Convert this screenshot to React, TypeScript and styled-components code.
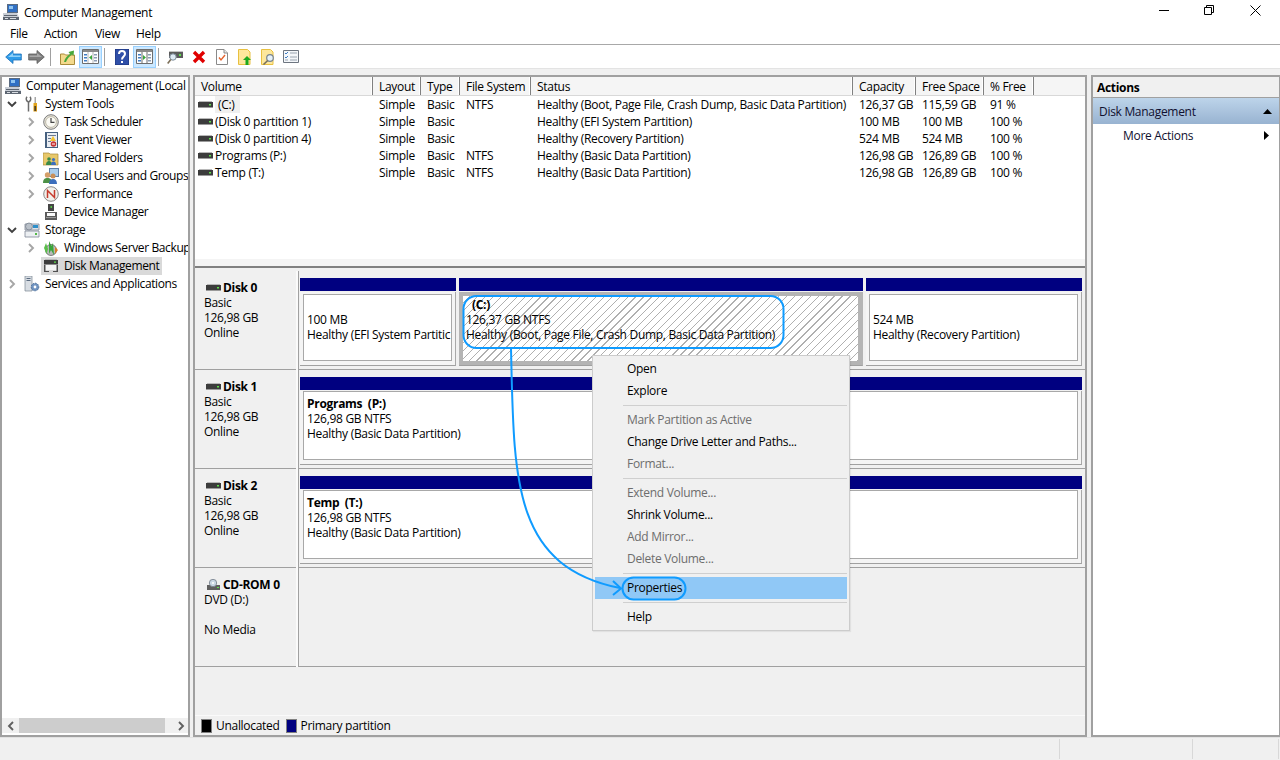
import React from "react";
import styled, { createGlobalStyle } from "styled-components";

const Global = createGlobalStyle`
  html, body { margin: 0; padding: 0; background: #f0f0f0; }
  * { box-sizing: border-box; }
  #root { width: 1280px; height: 760px; overflow: hidden; }
`;

const Page = styled.div`
  position: relative;
  width: 1280px;
  height: 760px;
  display: flex;
  flex-direction: column;
  background: #f0f0f0;
  color: #000;
  font-family: "Open Sans", "Noto Sans", sans-serif;
  font-size: 12px;
  letter-spacing: -0.3px;
  line-height: 15px;
  white-space: nowrap;
`;

const TitleBar = styled.div`
  height: 22px;
  background: #fff;
  display: flex;
  align-items: center;
  padding-left: 3px;
  gap: 5px;
  padding-top: 2px;
`;
const TitleText = styled.span`
  flex: 1;
`;
const WinControls = styled.div`
  display: flex;
  height: 22px;
  margin-top: -4px;
`;
const WinBtn = styled.div<{ $w: number }>`
  width: ${(p) => p.$w}px;
  display: flex;
  align-items: center;
  justify-content: center;
`;

const MenuBar = styled.div`
  height: 23px;
  background: #fff;
  border-bottom: 1px solid #a8a8a8;
  display: flex;
  align-items: center;
  padding-left: 10px;
`;
const MenuEntry = styled.span<{ $w: number }>`
  width: ${(p) => p.$w}px;
`;

const Toolbar = styled.div`
  height: 24px;
  background: #fff;
  border-bottom: 1px solid #e3e3e3;
  display: flex;
  align-items: center;
  padding-left: 2px;
`;
const Tool = styled.div<{ $on?: boolean }>`
  width: 23px;
  height: 22px;
  display: flex;
  align-items: center;
  justify-content: center;
  background: ${(p) => (p.$on ? "#cce8ff" : "transparent")};
  border: 1px solid ${(p) => (p.$on ? "#99d1ff" : "transparent")};
`;
const ToolSep = styled.div`
  width: 1px;
  height: 18px;
  background: #a0a0a0;
  margin: 0 5px 0 2px;
`;

const Workspace = styled.div`
  flex: 1;
  display: flex;
  padding-top: 6px;
  min-height: 0;
`;

const TreePane = styled.div`
  width: 190px;
  margin-right: 3px;
  border: 2px solid #a0a0a0;
  background: #fff;
  display: flex;
  flex-direction: column;
  overflow: hidden;
`;
const TreeList = styled.div`
  flex: 1;
  overflow: hidden;
  letter-spacing: -0.38px;
`;
const TreeRow = styled.div<{ $level: number }>`
  height: 18px;
  display: flex;
  align-items: center;
  padding-left: ${(p) => [3, 3, 22][p.$level]}px;
`;
const Twist = styled.span`
  width: 14px;
  flex: none;
  margin-right: 5px;
  display: flex;
  justify-content: center;
`;
const TreeIcon = styled.span`
  width: 16px;
  height: 16px;
  flex: none;
  margin-right: 5px;
  display: flex;
  align-items: center;
  justify-content: center;
`;
const TreeLabel = styled.span<{ $sel?: boolean }>`
  background: ${(p) => (p.$sel ? "#d9d9d9" : "transparent")};
  margin-left: ${(p) => (p.$sel ? "-23px" : "0")};
  padding-left: ${(p) => (p.$sel ? "23px" : "0")};
  padding-right: ${(p) => (p.$sel ? "3px" : "0")};
  height: 18px;
  line-height: 18px;
`;
const SelIcon = styled(TreeIcon)`
  position: relative;
  z-index: 1;
`;
const HScroll = styled.div`
  height: 15px;
  margin-bottom: 2px;
  display: flex;
  align-items: center;
  background: #f0f0f0;
`;
const ScrollEnd = styled.span<{ $right?: boolean }>`
  width: ${(p) => (p.$right ? "23px" : "17px")};
  padding-left: ${(p) => (p.$right ? "8px" : "0")};
  flex: none;
  display: flex;
  justify-content: center;
`;
const ScrollThumb = styled.div`
  width: 146px;
  height: 15px;
  background: #cdcdcd;
`;

const Center = styled.div`
  width: 894px;
  margin-right: 4px;
  border: 2px solid #a0a0a0;
  display: flex;
  flex-direction: column;
  background: #f0f0f0;
`;
const ListPane = styled.div`
  height: 182px;
  background: #fff;
  flex: none;
`;
const HeadRow = styled.div`
  height: 19px;
  display: flex;
  background: #f5f5f5;
  border-bottom: 1px solid #d8d8d8;
`;
const HeadCell = styled.div<{ $w: number }>`
  width: ${(p) => p.$w}px;
  flex: none;
  padding-left: 6px;
  line-height: 19px;
  border-right: 1px solid #808080;
  box-shadow: inset -1px 0 0 #fff;
`;
const DataRow = styled.div`
  height: 17px;
  display: flex;
  align-items: center;
`;
const Cell = styled.div<{ $w: number }>`
  width: ${(p) => p.$w}px;
  flex: none;
  padding-left: 6px;
`;
const VolCell = styled.div<{ $w: number }>`
  width: ${(p) => p.$w}px;
  flex: none;
  display: flex;
  align-items: center;
  padding-left: 3px;
  gap: 2px;
`;
const VolName = styled.span<{ $sel?: boolean }>`
  background: ${(p) => (p.$sel ? "#f0f0f0" : "transparent")};
  padding: ${(p) => (p.$sel ? "0 5px 0 3px" : "0")};
  line-height: 17px;
`;

const Sash = styled.div`
  height: 9px;
  flex: none;
  background: #f4f4f4;
  border-bottom: 2px solid #808080;
`;

const Graph = styled.div`
  flex: 1;
  display: flex;
  flex-direction: column;
  padding-top: 3px;
`;
const DiskRow = styled.div`
  height: 99px;
  flex: none;
  display: flex;
  border-bottom: 1px solid #a0a0a0;
`;
const DiskInfo = styled.div`
  width: 104px;
  flex: none;
  padding: 9px 0 0 9px;
  border-right: 1px solid #a0a0a0;
  box-shadow: inset -2px 0 0 #fafafa;
  margin-bottom: -1px;
`;
const DiskName = styled.div`
  display: flex;
  align-items: center;
  gap: 2px;
  margin-left: 2px;
  font-weight: 700;
`;
const Parts = styled.div`
  flex: 1;
  display: flex;
  gap: 3px;
  padding: 7px 0 0 1px;
`;
const Part = styled.div<{ $w: number }>`
  width: ${(p) => p.$w}px;
  flex: none;
  display: flex;
  flex-direction: column;
`;
const PartBar = styled.div`
  height: 13px;
  background: #000080;
  flex: none;
  margin-bottom: 1px;
`;
const PartFrame = styled.div<{ $sel?: boolean; $inset?: boolean }>`
  height: 74px;
  padding: ${(p) => (p.$sel ? "0" : p.$inset ? "2px 3px 4px" : "0 3px 4px")};
  border-bottom: 1px solid #a0a0a0;
  border-right: 1px solid ${(p) => (p.$sel ? "#b4b4b4" : "#a8a8a8")};
  background: #f4f4f4;
  display: flex;
`;
const PartBody = styled.div<{ $sel?: boolean; $inset?: boolean }>`
  flex: 1;
  padding: ${(p) => (p.$sel ? "1px 0 0 3px" : p.$inset ? "2px 0 0 3px" : "4px 0 0 3px")};
  border: ${(p) => (p.$sel ? "4px solid #b4b4b4" : "1px solid #a8a8a8")};
  overflow: hidden;
  background: ${(p) =>
    p.$sel
      ? "repeating-linear-gradient(135deg, #fff 0 4.7px, #b0b0b0 4.7px 5.6px)"
      : "#fff"};
`;
const PartTitle = styled.div<{ $indent?: boolean }>`
  font-weight: 700;
  height: 15px;
  white-space: pre;
  padding-left: ${(p) => (p.$indent ? "6px" : "0")};
`;
const CdFill = styled.div`
  flex: 1;
`;
const Legend = styled.div`
  flex: 1;
  display: flex;
  flex-direction: column;
  justify-content: flex-end;
`;
const LegendRow = styled.div`
  height: 20px;
  display: flex;
  align-items: center;
  padding-left: 6px;
  border-top: 1px solid #fafafa;
`;
const Swatch = styled.span<{ $c: string }>`
  width: 11px;
  height: 14px;
  background: ${(p) => p.$c};
  border: 1px solid #808080;
  margin-right: 4px;
`;
const LegendText = styled.span`
  margin-right: 6px;
`;

const ActionsPane = styled.div`
  width: 189px;
  border: 2px solid #a0a0a0;
  border-right-width: 1px;
  background: #fff;
`;
const ActionsHead = styled.div`
  height: 21px;
  padding-left: 4px;
  line-height: 21px;
  font-weight: 700;
  background: #f0f0f0;
  border-bottom: 1px solid #a0a0a0;
`;
const ActionsGroup = styled.div`
  height: 26px;
  display: flex;
  align-items: center;
  justify-content: space-between;
  padding: 0 7px 0 6px;
  background: linear-gradient(#bdd4ea, #98b3d1);
  color: #101030;
`;
const ActionItem = styled.div`
  height: 22px;
  display: flex;
  align-items: center;
  justify-content: space-between;
  padding: 0 10px 0 30px;
  color: #101030;
`;

const StatusBar = styled.div`
  height: 23px;
  display: flex;
  justify-content: flex-end;
  background: #f0f0f0;
  border-top: 1px solid #e2e2e2;
`;
const StatusCell = styled.div<{ $w: number }>`
  width: ${(p) => p.$w}px;
  border-left: 1px solid #d8d8d8;
  margin: 1px 0;
`;

const MenuPanel = styled.div`
  position: absolute;
  left: 592px;
  top: 355px;
  width: 258px;
  height: 276px;
  padding: 2px;
  background: #f0f0f0;
  border: 1px solid #cccccc;
  box-shadow: 1px 1px 1px rgba(0, 0, 0, 0.06);
`;
const MenuItem = styled.div<{ $off?: boolean; $hot?: boolean }>`
  height: 22px;
  line-height: 22px;
  padding-left: 32px;
  color: ${(p) => (p.$off ? "#6d6d6d" : "#000")};
  background: ${(p) => (p.$hot ? "#90c8f6" : "transparent")};
`;
const MenuSep = styled.div`
  height: 1px;
  margin: 3px 0 3px 28px;
  background: #cfcfcf;
`;
const Overlay = styled.svg`
  position: absolute;
  left: 0;
  top: 0;
  pointer-events: none;
`;

/* ---- icons ---- */
const DiskIcon = () => (
  <svg width="15" height="9" viewBox="0 0 15 9">
    <path d="M1 1h13v1H1z" fill="#b8b8b8" />
    <path d="M0 2h15v5H0z" fill="#3c3c3c" />
    <path d="M0 7h15v1H0z" fill="#9a9a9a" />
    <path d="M11 4h2v1.400h-2z" fill="#5ee04a" />
  </svg>
);
const DiskMgmtIcon = () => (
  <svg width="16" height="14" viewBox="0 0 16 14">
    <path d="M2 0h12v1H2z" fill="#b8b8b8" />
    <path d="M1 1h14v4H1z" fill="#3c3c3c" />
    <path d="M11 2.500h2v1.200h-2z" fill="#5ee04a" />
    <path d="M1 5h14v1H1z" fill="#8c8c8c" />
    <path d="M2 6h12v5H2z" fill="#f6f6f6" />
    <path d="M1 6h1.500v7H1zM13.500 6H15v7h-1.500zM1 12h5v1H1zM10 12h5v1h-5z" fill="#505050" />
  </svg>
);
const CompIcon = () => (
  <svg width="16" height="16" viewBox="0 0 16 16">
    <path d="M4 0h11v9H4z" fill="#5b6b80" />
    <path d="M5 1h9v7H5z" fill="#2f6fc4" />
    <path d="M6 2h4v3H6z" fill="#8fc4f0" />
    <path d="M0 9h14l2 4H0z" fill="#c9ced6" />
    <path d="M1 11h13v1H1zM0 13h16v3H0z" fill="#5d6672" />
    <path d="M2 14h3v1H2zM7 14h6v1H7z" fill="#d8dce2" />
  </svg>
);
const ToolsIcon = () => (
  <svg width="16" height="16" viewBox="0 0 16 16">
    <path d="M3 .8C1.500 2.500 2.200 5.300 4.500 6v9.500" stroke="#6b6b6b" strokeWidth="1.500" fill="none" />
    <path d="M6 .8C7.500 2.500 6.800 5.300 4.500 6" stroke="#6b6b6b" strokeWidth="1.500" fill="none" />
    <path d="M10.500 1h1.500v6h-1.500z" fill="#a8a8a8" />
    <path d="M9.500 7h3.500v3H9.500z" fill="#e2a41c" />
    <path d="M9.500 10h3.500v5.500H9.500z" fill="#d9960f" />
    <path d="M10.500 10h1.300v5h-1.300z" fill="#30302c" />
  </svg>
);
const ClockIcon = () => (
  <svg width="16" height="16" viewBox="0 0 16 16">
    <circle cx="8" cy="8" r="7.300" fill="#e9e6dc" stroke="#7a7a7a" />
    <circle cx="8" cy="8" r="5.400" fill="#fbfaf4" stroke="#bdb9a8" />
    <path d="M8 4v4.300h3.500" stroke="#444" strokeWidth="1.200" fill="none" />
  </svg>
);
const EventIcon = () => (
  <svg width="16" height="16" viewBox="0 0 16 16">
    <path d="M2 0h13v16H2z" fill="#46607f" />
    <path d="M4 1h10v14H4z" fill="#e9edf2" />
    <path d="M5 3h8v1H5zM5 6h3v1H5zM5 9h3v1H5z" fill="#6a7a92" />
    <path d="M10 4l3 5H7z" fill="#f2c230" />
    <circle cx="10.500" cy="12" r="2.800" fill="#c73434" />
    <path d="M9 12h3" stroke="#fff" />
  </svg>
);
const SharedIcon = () => (
  <svg width="16" height="16" viewBox="0 0 16 16">
    <path d="M0 3h6l1 1h8v11H0z" fill="#e8c86a" stroke="#a98b3a" strokeWidth=".7" />
    <circle cx="6" cy="9" r="1.800" fill="#3b8a47" />
    <path d="M3 15c0-3 1.400-4 3-4s3 1 3 4z" fill="#3b8a47" />
    <circle cx="10.500" cy="9.500" r="1.600" fill="#3d6fbd" />
    <path d="M8 15c0-2.500 1-3.500 2.500-3.500s2.500 1 2.500 3.500z" fill="#3d6fbd" />
  </svg>
);
const UsersIcon = () => (
  <svg width="16" height="16" viewBox="0 0 16 16">
    <path d="M6 0h10v9H6z" fill="#5b7ea8" />
    <path d="M7 1h8v7H7z" fill="#a9cdec" />
    <circle cx="4.500" cy="7" r="2.700" fill="#d59f6a" />
    <path d="M0 15c0-4 2-5 4.500-5S9 11 9 15z" fill="#4d9147" />
    <circle cx="10" cy="8" r="2.500" fill="#c98f58" />
    <path d="M6 16c0-3.500 1.600-5 4-5s4 1.500 4 5z" fill="#3d6fbd" />
  </svg>
);
const PerfIcon = () => (
  <svg width="16" height="16" viewBox="0 0 16 16">
    <circle cx="8" cy="8" r="7.300" fill="#f2f0ea" stroke="#8a8a8a" />
    <path d="M4.500 12V4.500l7 7V4" stroke="#c53a2c" strokeWidth="1.500" fill="none" />
  </svg>
);
const DeviceIcon = () => (
  <svg width="16" height="16" viewBox="0 0 16 16">
    <path d="M5 0h6v7H5z" fill="#454545" />
    <path d="M7.500 2h1.500v2H7.500z" fill="#56c744" />
    <path d="M2 8h12v8H2z" fill="#5b5b5b" />
    <path d="M4 9h8v3H4z" fill="#fafafa" />
    <path d="M3 13h10v1H3z" fill="#9b9b9b" />
  </svg>
);
const StorageIcon = () => (
  <svg width="16" height="16" viewBox="0 0 16 16">
    <path d="M1 2h14v6H1z" fill="#dfe3e8" stroke="#7d8794" strokeWidth=".8" />
    <circle cx="5" cy="4.500" r="3.500" fill="#b9c0c8" stroke="#707a86" strokeWidth=".7" />
    <path d="M9 3h5v3H9z" fill="#2f8fc9" />
    <path d="M1 9h14v6H1z" fill="#eceff2" stroke="#7d8794" strokeWidth=".8" />
    <path d="M11 11h2v2h-2z" fill="#53b947" />
  </svg>
);
const BackupIcon = () => (
  <svg width="16" height="16" viewBox="0 0 16 16">
    <circle cx="8" cy="10" r="5.500" fill="#b9b9b9" stroke="#555" strokeWidth=".7" />
    <path d="M6 1l2.500 5 1.500-3 1 12-3-5-2 4z" fill="#3aa53a" />
    <path d="M3 3l2 6-1.500 5L1 8z" fill="#5abf4a" />
    <path d="M12 7l3 3-3 4z" fill="#d77d2a" />
  </svg>
);
const ServicesIcon = () => (
  <svg width="16" height="16" viewBox="0 0 16 16">
    <path d="M1 0h7v15H1z" fill="#d8dde3" stroke="#7d8794" strokeWidth=".7" />
    <path d="M2.500 2h4v1h-4zM2.500 4h4v1h-4z" fill="#5c6c80" />
    <circle cx="11" cy="11" r="3.800" fill="#6f93c0" stroke="#4c6d97" strokeDasharray="1.500 1" />
    <circle cx="11" cy="11" r="1.400" fill="#fff" />
  </svg>
);
const Chevron = ({ open, dark, left }: { open?: boolean; dark?: boolean; left?: boolean }) => (
  <svg width="10" height="10" viewBox="0 0 10 10">
    <path
      d={open ? "M1 3l4 4 4-4" : left ? "M7 1L3 5l4 4" : "M3 1l4 4-4 4"}
      fill="none"
      stroke={open ? "#404040" : dark ? "#606060" : "#a6a6a6"}
      strokeWidth="1.900"
    />
  </svg>
);

const BackIcon = () => (
  <svg width="17" height="14" viewBox="0 0 17 14">
    <path d="M8 .5L.7 7 8 13.500V10h8.300V4H8z" fill="#2e9be8" stroke="#1d6fb8" strokeWidth=".8" />
    <path d="M8 3v2.500h7.500V7H3z" fill="#8ed0f8" />
  </svg>
);
const ForwardIcon = () => (
  <svg width="17" height="14" viewBox="0 0 17 14">
    <path d="M9 .5L16.300 7 9 13.500V10H.7V4H9z" fill="#7d7d7d" stroke="#5a5a5a" strokeWidth=".8" />
    <path d="M9 3v2.500H1.500V7H14z" fill="#a9a9a9" />
  </svg>
);
const UpIcon = () => (
  <svg width="15" height="16" viewBox="0 0 15 16">
    <path d="M.5 5h4l1 1h9v9.500H.5z" fill="#f3d98c" stroke="#a98b3a" />
    <path d="M4 13c1-4 3-6 6-8l-1.500-2L14 1.500 13.500 7 12 5.500C9 8 7 10 6 13z" fill="#4aa83a" />
  </svg>
);
const PaneIcon = ({ dir }: { dir: "l" | "r" }) => (
  <svg width="17" height="15" viewBox="0 0 17 15">
    <path d="M.5.500h16v14H.5z" fill="#fff" stroke="#6d6d6d" />
    <path d="M1 1h15v2H1z" fill="#8a8a8a" />
    <path d="M6 3v11M11 3v11" stroke={dir === "l" ? "#b5b5b5" : "#6d6d6d"} />
    <path d="M2 5h3v1.500H2zM2 8h3v1.500H2zM2 11h3v1.500H2z" fill="#3f7dc4" />
    <path d="M12 5h3v1.500h-3zM12 8h3v1.500h-3zM12 11h3v1.500h-3z" fill="#8a9cb4" />
    <path d={dir === "l" ? "M10 6v5L7 8.500z" : "M7 6v5l3-2.500z"} fill="#3aa53a" />
  </svg>
);
const HelpIcon = () => (
  <svg width="14" height="16" viewBox="0 0 14 16">
    <path d="M0 0h14v16H0z" fill="#2f4fa8" />
    <path d="M0 0h14v16H0z" fill="none" stroke="#1d3278" />
    <path d="M4 5c0-4 6-4 6 0 0 2.500-3 2.500-3 5.500" fill="none" stroke="#fff" strokeWidth="2" />
    <path d="M6 12h2v2H6z" fill="#fff" />
  </svg>
);
const ConnectIcon = () => (
  <svg width="17" height="16" viewBox="0 0 17 16">
    <path d="M2 3h14v6H2z" fill="#5b5b5b" />
    <path d="M2 2h14v1H2z" fill="#c4c4c4" />
    <path d="M12 5h2v2h-2z" fill="#5ee04a" />
    <circle cx="6" cy="8" r="3.200" fill="#dfeaf4" stroke="#7b8a99" />
    <path d="M3.800 10.500L.7 14.500" stroke="#7c6f58" strokeWidth="1.600" />
  </svg>
);
const DeleteIcon = () => (
  <svg width="14" height="14" viewBox="0 0 14 14">
    <path d="M2 2l10 10M12 2L2 12" stroke="#e00000" strokeWidth="3.400" />
  </svg>
);
const DocIcon = () => (
  <svg width="12" height="16" viewBox="0 0 12 16">
    <path d="M.5.500H8L11.500 4v11.500H.5z" fill="#fff" stroke="#8a8a8a" />
    <path d="M8 .5V4h3.500" fill="#e9e9e9" stroke="#8a8a8a" />
    <path d="M3 8.500l2 2.500 4-5" fill="none" stroke="#e4632e" strokeWidth="1.400" />
  </svg>
);
const YellowPage = ({ kind }: { kind: "up" | "find" }) => (
  <svg width="14" height="16" viewBox="0 0 14 16">
    <path d="M.5.500h9L12 3v12.500H.5z" fill="#fde79c" stroke="#e8c040" />
    {kind === "up" ? (
      <path d="M9 7l4 4h-2.500v5h-3v-5H5z" fill="#1da81d" />
    ) : (
      <>
        <circle cx="9" cy="9" r="3.300" fill="#e5f1fa" stroke="#78848f" strokeWidth="1.200" />
        <path d="M6.700 11.500L2.500 15.500" stroke="#78705c" strokeWidth="1.600" />
      </>
    )}
  </svg>
);
const ListIcon = () => (
  <svg width="16" height="13" viewBox="0 0 16 13">
    <path d="M.5.500h15v12H.5z" fill="#f4f7fa" stroke="#6d7580" />
    <path d="M2 3l1 1 2-2M2 7l1 1 2-2" fill="none" stroke="#3f7dc4" />
    <path d="M7 3h7M7 7h7M7 10h7M2 10h3" stroke="#9aa4b0" />
  </svg>
);
const TriUp = () => (
  <svg width="9" height="5" viewBox="0 0 9 5">
    <path d="M4.500 0L9 5H0z" fill="#000" />
  </svg>
);
const TriRight = () => (
  <svg width="5" height="9" viewBox="0 0 5 9">
    <path d="M0 0l5 4.500L0 9z" fill="#000" />
  </svg>
);
const CdIcon = () => (
  <svg width="15" height="12" viewBox="0 0 15 12">
    <path d="M1 6h13v5H1z" fill="#5f5f5f" />
    <circle cx="7" cy="4" r="3.700" fill="#c9d6e4" stroke="#717a85" strokeWidth=".8" />
    <circle cx="7" cy="4" r="1" fill="#fff" />
    <path d="M11 8h2v1h-2z" fill="#5ee04a" />
  </svg>
);

/* ---- data ---- */
const tree: { level: number; label: string; icon: React.ReactNode; twist?: "open" | "closed"; sel?: boolean }[] = [
  { level: 0, label: "Computer Management (Local", icon: <CompIcon /> },
  { level: 1, label: "System Tools", icon: <ToolsIcon />, twist: "open" },
  { level: 2, label: "Task Scheduler", icon: <ClockIcon />, twist: "closed" },
  { level: 2, label: "Event Viewer", icon: <EventIcon />, twist: "closed" },
  { level: 2, label: "Shared Folders", icon: <SharedIcon />, twist: "closed" },
  { level: 2, label: "Local Users and Groups", icon: <UsersIcon />, twist: "closed" },
  { level: 2, label: "Performance", icon: <PerfIcon />, twist: "closed" },
  { level: 2, label: "Device Manager", icon: <DeviceIcon /> },
  { level: 1, label: "Storage", icon: <StorageIcon />, twist: "open" },
  { level: 2, label: "Windows Server Backup", icon: <BackupIcon />, twist: "closed" },
  { level: 2, label: "Disk Management", icon: <DiskMgmtIcon />, sel: true },
  { level: 1, label: "Services and Applications", icon: <ServicesIcon />, twist: "closed" },
];

const cols = [
  { t: "Volume", w: 178 },
  { t: "Layout", w: 48 },
  { t: "Type", w: 39 },
  { t: "File System", w: 71 },
  { t: "Status", w: 322 },
  { t: "Capacity", w: 63 },
  { t: "Free Space", w: 68 },
  { t: "% Free", w: 50 },
];

const vols = [
  ["(C:)", "Simple", "Basic", "NTFS", "Healthy (Boot, Page File, Crash Dump, Basic Data Partition)", "126,37 GB", "115,59 GB", "91 %"],
  ["(Disk 0 partition 1)", "Simple", "Basic", "", "Healthy (EFI System Partition)", "100 MB", "100 MB", "100 %"],
  ["(Disk 0 partition 4)", "Simple", "Basic", "", "Healthy (Recovery Partition)", "524 MB", "524 MB", "100 %"],
  ["Programs (P:)", "Simple", "Basic", "NTFS", "Healthy (Basic Data Partition)", "126,98 GB", "126,89 GB", "100 %"],
  ["Temp (T:)", "Simple", "Basic", "NTFS", "Healthy (Basic Data Partition)", "126,98 GB", "126,89 GB", "100 %"],
];

const disks = [
  {
    name: "Disk 0",
    lines: ["Basic", "126,98 GB", "Online"],
    inset: true,
    parts: [
      { w: 156, title: "", lines: ["100 MB", "Healthy (EFI System Partitic"] },
      { w: 404, title: "(C:)", sel: true, lines: ["126,37 GB NTFS", "Healthy (Boot, Page File, Crash Dump, Basic Data Partition)"] },
      { w: 216, title: "", lines: ["524 MB", "Healthy (Recovery Partition)"] },
    ],
  },
  {
    name: "Disk 1",
    lines: ["Basic", "126,98 GB", "Online"],
    inset: false,
    parts: [{ w: 782, title: "Programs  (P:)", lines: ["126,98 GB NTFS", "Healthy (Basic Data Partition)"] }],
  },
  {
    name: "Disk 2",
    lines: ["Basic", "126,98 GB", "Online"],
    inset: false,
    parts: [{ w: 782, title: "Temp  (T:)", lines: ["126,98 GB NTFS", "Healthy (Basic Data Partition)"] }],
  },
];

const menu: ({ t: string; off?: boolean; hot?: boolean } | null)[] = [
  { t: "Open" },
  { t: "Explore" },
  null,
  { t: "Mark Partition as Active", off: true },
  { t: "Change Drive Letter and Paths..." },
  { t: "Format...", off: true },
  null,
  { t: "Extend Volume...", off: true },
  { t: "Shrink Volume..." },
  { t: "Add Mirror...", off: true },
  { t: "Delete Volume...", off: true },
  null,
  { t: "Properties", hot: true },
  null,
  { t: "Help" },
];

export default function App() {
  return (
    <Page>
      <Global />
      <TitleBar>
        <CompIcon />
        <TitleText>Computer Management</TitleText>
        <WinControls>
          <WinBtn $w={48}>
            <svg width="10" height="10" viewBox="0 0 10 10"><path d="M0 5.500h10" stroke="#000" /></svg>
          </WinBtn>
          <WinBtn $w={42}>
            <svg width="10" height="10" viewBox="0 0 10 10"><path d="M.5 2.500h7v7h-7zM2.500 2.500V.5h7v7h-2" fill="none" stroke="#000" /></svg>
          </WinBtn>
          <WinBtn $w={50}>
            <svg width="11" height="11" viewBox="0 0 11 11"><path d="M.5.500l10 10M10.500.5l-10 10" stroke="#000" /></svg>
          </WinBtn>
        </WinControls>
      </TitleBar>
      <MenuBar>
        <MenuEntry $w={34}>File</MenuEntry>
        <MenuEntry $w={51}>Action</MenuEntry>
        <MenuEntry $w={41}>View</MenuEntry>
        <MenuEntry $w={30}>Help</MenuEntry>
      </MenuBar>
      <Toolbar>
        <Tool><BackIcon /></Tool>
        <Tool><ForwardIcon /></Tool>
        <ToolSep />
        <Tool><UpIcon /></Tool>
        <Tool $on><PaneIcon dir="l" /></Tool>
        <ToolSep />
        <Tool><HelpIcon /></Tool>
        <Tool $on><PaneIcon dir="r" /></Tool>
        <ToolSep />
        <Tool><ConnectIcon /></Tool>
        <Tool><DeleteIcon /></Tool>
        <Tool><DocIcon /></Tool>
        <Tool><YellowPage kind="up" /></Tool>
        <Tool><YellowPage kind="find" /></Tool>
        <Tool><ListIcon /></Tool>
      </Toolbar>
      <Workspace>
        <TreePane>
          <TreeList>
            {tree.map((r) => (
              <TreeRow key={r.label} $level={r.level}>
                {r.level > 0 && (
                  <Twist>{r.twist && <Chevron open={r.twist === "open"} />}</Twist>
                )}
                {r.sel ? <SelIcon>{r.icon}</SelIcon> : <TreeIcon>{r.icon}</TreeIcon>}
                <TreeLabel $sel={r.sel}>{r.label}</TreeLabel>
              </TreeRow>
            ))}
          </TreeList>
          <HScroll>
            <ScrollEnd><Chevron dark left /></ScrollEnd>
            <ScrollThumb />
            <ScrollEnd $right><Chevron dark /></ScrollEnd>
          </HScroll>
        </TreePane>
        <Center>
          <ListPane>
            <HeadRow>
              {cols.map((c) => (
                <HeadCell key={c.t} $w={c.w}>{c.t}</HeadCell>
              ))}
            </HeadRow>
            {vols.map((v, i) => (
              <DataRow key={v[0]}>
                <VolCell $w={cols[0].w}>
                  <DiskIcon />
                  <VolName $sel={i === 0}>{v[0]}</VolName>
                </VolCell>
                {v.slice(1).map((t, j) => (
                  <Cell key={j} $w={cols[j + 1].w}>{t}</Cell>
                ))}
              </DataRow>
            ))}
          </ListPane>
          <Sash />
          <Graph>
            {disks.map((d) => (
              <DiskRow key={d.name}>
                <DiskInfo>
                  <DiskName><DiskIcon />{d.name}</DiskName>
                  {d.lines.map((l) => (
                    <div key={l}>{l}</div>
                  ))}
                </DiskInfo>
                <Parts>
                  {d.parts.map((p) => (
                    <Part key={p.lines[1]} $w={p.w}>
                      <PartBar />
                      <PartFrame $sel={p.sel} $inset={d.inset}>
                        <PartBody $sel={p.sel} $inset={d.inset}>
                          <PartTitle $indent={p.sel}>{p.title}</PartTitle>
                          {p.lines.map((l) => (
                            <div key={l}>{l}</div>
                          ))}
                        </PartBody>
                      </PartFrame>
                    </Part>
                  ))}
                </Parts>
              </DiskRow>
            ))}
            <DiskRow>
              <DiskInfo>
                <DiskName><CdIcon />CD-ROM 0</DiskName>
                <div>DVD (D:)</div>
                <div>&nbsp;</div>
                <div>No Media</div>
              </DiskInfo>
              <CdFill />
            </DiskRow>
            <Legend>
              <LegendRow>
                <Swatch $c="#000" />
                <LegendText>Unallocated</LegendText>
                <Swatch $c="#000080" />
                <LegendText>Primary partition</LegendText>
              </LegendRow>
            </Legend>
          </Graph>
        </Center>
        <ActionsPane>
          <ActionsHead>Actions</ActionsHead>
          <ActionsGroup>Disk Management<TriUp /></ActionsGroup>
          <ActionItem>More Actions<TriRight /></ActionItem>
        </ActionsPane>
      </Workspace>
      <StatusBar>
        <StatusCell $w={133} />
        <StatusCell $w={86} />
        <StatusCell $w={2} />
      </StatusBar>
      <MenuPanel>
        {menu.map((m, i) =>
          m ? (
            <MenuItem key={m.t} $off={m.off} $hot={m.hot}>{m.t}</MenuItem>
          ) : (
            <MenuSep key={i} />
          )
        )}
      </MenuPanel>
      <Overlay width="1280" height="760" viewBox="0 0 1280 760" fill="none" stroke="#0f9bff" strokeWidth="2">
        <rect x="463.500" y="296" width="320" height="52" rx="13" />
        <rect x="622.500" y="577.500" width="63" height="22" rx="11" />
        <path d="M511 348C514 480 512 566 620 588" />
        <path d="M613 581L621 588.500 613 595" />
      </Overlay>
    </Page>
  );
}
